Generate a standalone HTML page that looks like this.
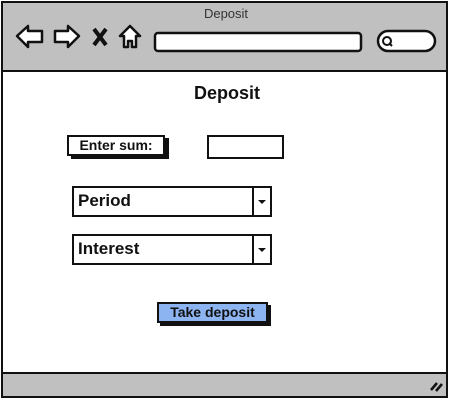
<!DOCTYPE html>
<html><head><style>
*{margin:0;padding:0;box-sizing:border-box}
body{width:450px;height:400px;background:#fff;position:relative;overflow:hidden;font-family:"Liberation Sans",sans-serif}
.a{position:absolute}
.frame{left:1px;top:1px;width:447px;height:397px;border:2px solid #111;background:#fff}
.hdr{left:3px;top:3px;width:443px;height:69px;background:#c0c0c0;border-bottom:2px solid #111}
.ftr{left:3px;top:372px;width:443px;height:24px;background:#c0c0c0;border-top:2px solid #111}
.box{border:2px solid #111;background:#fff}
.t{font-weight:bold;color:#111}
</style></head><body>
<div class="a frame"></div>
<div class="a hdr"></div>
<div class="a ftr"></div>
<div class="a" style="left:0;top:6px;width:452px;text-align:center;font-size:13px;color:#333">Deposit</div>
<svg class="a" style="left:0;top:0" width="450" height="400">
<g fill="#fff" stroke="#111" stroke-width="2.5" stroke-linejoin="round">
<path d="M17 36 L28 26 L28 31 L42 31 L42 42 L28 42 L28 47 Z"/>
<path d="M79 36 L68 26 L68 31 L55 31 L55 42 L68 42 L68 47 Z"/>
<path d="M130 26 L140 36 L136 36 L136 47 L132 47 L132 41 L128 41 L128 47 L124 47 L124 36 L120 36 Z"/>
<rect x="155" y="33" width="206" height="18" rx="3"/>
<rect x="378" y="31" width="57" height="20" rx="10"/>
<circle cx="387" cy="41" r="4" stroke-width="2"/>
</g>
<path d="M94 29 L106 45 M106 29 L94 45" stroke="#111" stroke-width="4"/>
<path d="M389 43 L392 46" stroke="#111" stroke-width="2"/>
<path d="M431 390 L437 383 M436 391 L442 384" stroke="#111" stroke-width="2.5"/>
</svg>
<div class="a t" style="left:0;top:83px;width:454px;text-align:center;font-size:18px">Deposit</div>
<div class="a box" style="left:67px;top:135px;width:98px;height:21px;box-shadow:4px 3px 0 #111"></div>
<div class="a t" style="left:67px;top:137px;width:98px;text-align:center;font-size:14px">Enter sum:</div>
<div class="a box" style="left:207px;top:135px;width:77px;height:24px"></div>
<div class="a box" style="left:72px;top:186px;width:200px;height:31px"></div>
<div class="a" style="left:252px;top:186px;width:2px;height:31px;background:#111"></div>
<div class="a t" style="left:78px;top:191px;font-size:17px">Period</div>
<div class="a" style="left:258px;top:200px;border:4px solid transparent;border-top:4px solid #111;border-bottom:0"></div>
<div class="a box" style="left:72px;top:234px;width:200px;height:31px"></div>
<div class="a" style="left:252px;top:234px;width:2px;height:31px;background:#111"></div>
<div class="a t" style="left:78px;top:239px;font-size:17px">Interest</div>
<div class="a" style="left:258px;top:248px;border:4px solid transparent;border-top:4px solid #111;border-bottom:0"></div>
<div class="a" style="left:157px;top:302px;width:111px;height:21px;border:2px solid #111;background:#8cb4f0;box-shadow:3px 3px 0 #111"></div>
<div class="a t" style="left:157px;top:304px;width:111px;text-align:center;font-size:14px">Take deposit</div>
</body></html>
